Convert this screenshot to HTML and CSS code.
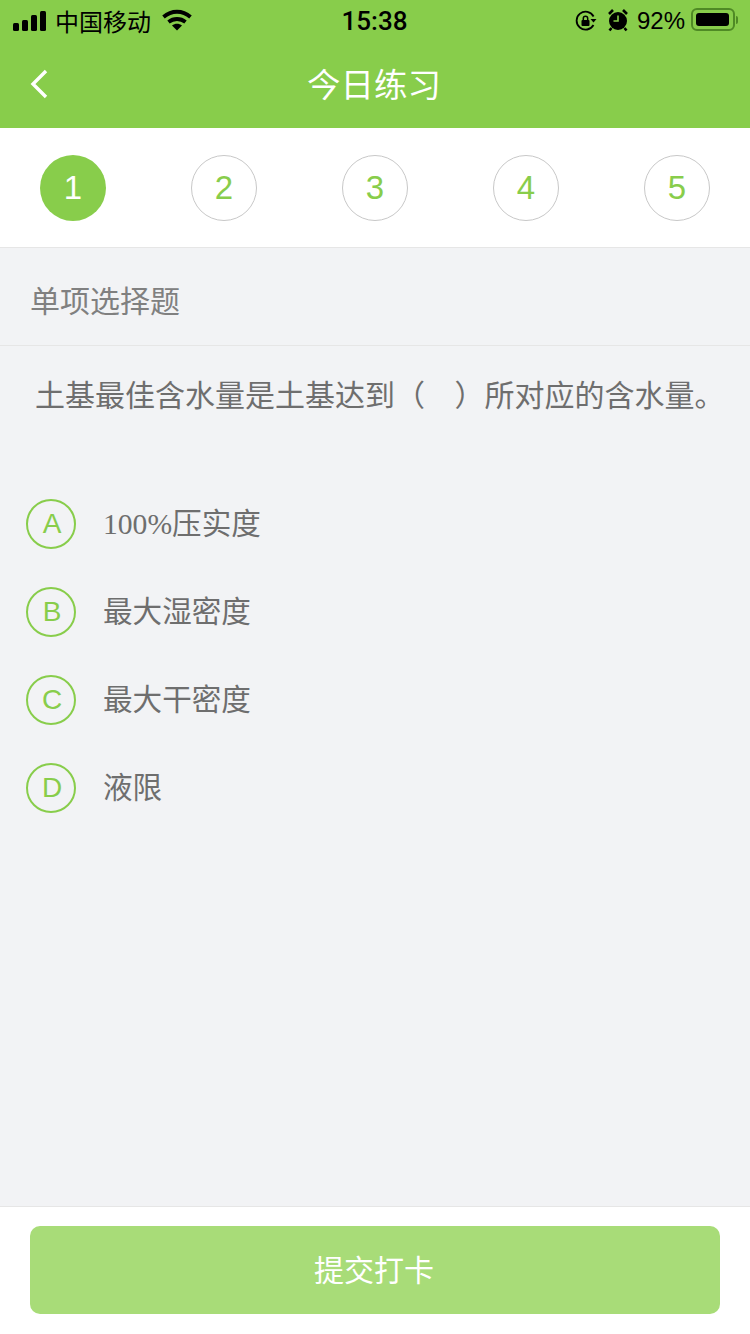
FILE: index.html
```html
<!DOCTYPE html>
<html lang="zh-CN">
<head>
    <meta charset="UTF-8">
    <meta name="viewport" content="width=device-width, initial-scale=1.0">
    <title>今日练习</title>
    <link rel="stylesheet" href="styles.css">
</head>
<body>
<div class="page">
    <header class="top">
        <div class="status-bar">
            <div class="status-left">
                <div class="signal"><i></i><i></i><i></i><i></i></div>
                <span class="carrier">中国移动</span>
                <svg class="wifi" width="30" height="22" viewBox="0 0 30 22">
                    <path d="M1.500 8C9.500 1 20.500 1 28.500 8" fill="none" stroke="#000" stroke-width="3.800"/>
                    <path d="M6.500 13c5-4 12-4 17 0" fill="none" stroke="#000" stroke-width="3.800"/>
                    <path d="M10 16.500c3-2.200 7-2.200 10 0l-5 5z" fill="#000"/>
                </svg>
            </div>
            <span class="clock">15:38</span>
            <div class="status-right">
                <svg class="lock" width="22" height="22" viewBox="0 0 22 22">
                    <path d="M18.500 15A9 9 0 1 1 18.600 6.500" fill="none" stroke="#000" stroke-width="1.800"/>
                    <path d="M15.500 9h6l-3 3.500z" fill="#000"/>
                    <rect x="6.500" y="10" width="8" height="6" rx="1" fill="#000"/>
                    <path d="M8.300 10.500V8.500a2.200 2.200 0 0 1 4.400 0v2" fill="none" stroke="#000" stroke-width="1.500"/>
                </svg>
                <svg class="alarm" width="22" height="24" viewBox="0 0 22 24">
                    <circle cx="11" cy="13" r="9" fill="#000"/>
                    <path d="M11 7.500V13H6.500" fill="none" stroke="#88cd4b" stroke-width="1.600"/>
                    <path d="M2 6 6 2M16 2l4 4M4.500 20l-2 2.500M17.500 20l2 2.500" stroke="#000" stroke-width="2.600"/>
                </svg>
                <span class="percent">92%</span>
                <div class="battery"><div class="battery-fill"></div></div>
                <div class="battery-cap"></div>
            </div>
        </div>
        <div class="nav-bar">
            <svg class="back" width="20" height="32" viewBox="0 0 20 32">
                <path d="M17 3 4 16l13 13" fill="none" stroke="#fff" stroke-width="3.400"/>
            </svg>
            <h1 class="nav-title">今日练习</h1>
        </div>
    </header>

    <nav class="steps">
        <span class="step active">1</span>
        <span class="step">2</span>
        <span class="step">3</span>
        <span class="step">4</span>
        <span class="step">5</span>
    </nav>

    <main class="content">
        <div class="q-type">单项选择题</div>
        <p class="q-text">土基最佳含水量是土基达到（&nbsp;&nbsp;&nbsp;）所对应的含水量。</p>
        <ul class="options">
            <li class="option"><span class="letter">A</span><span class="option-text">100%压实度</span></li>
            <li class="option"><span class="letter">B</span><span class="option-text">最大湿密度</span></li>
            <li class="option"><span class="letter">C</span><span class="option-text">最大干密度</span></li>
            <li class="option"><span class="letter">D</span><span class="option-text">液限</span></li>
        </ul>
    </main>

    <footer class="bottom">
        <button class="submit">提交打卡</button>
    </footer>
</div>
</body>
</html>
```
FILE: styles.css
```css
* {
    box-sizing: border-box;
    margin: 0;
    padding: 0;
}

body {
    width: 750px;
    height: 1334px;
    overflow: hidden;
    font-family: "Liberation Sans", "Noto Sans CJK SC", sans-serif;
}

.page {
    height: 1334px;
    display: flex;
    flex-direction: column;
    background-color: #f2f3f5;
}

.top {
    height: 128px;
    flex: none;
    background-color: #88cd4b;
}

.status-bar {
    height: 42px;
    padding: 0 12px 0 13px;
    display: flex;
    align-items: center;
    justify-content: space-between;
    color: #000;
}

.status-left {
    width: 190px;
    display: flex;
    align-items: center;
}

.signal {
    display: flex;
    align-items: flex-end;
    gap: 3px;
    height: 20px;
}

.signal i {
    width: 6px;
    border-radius: 1.5px;
    background-color: #000;
}

.signal i:nth-child(1) { height: 8px; }
.signal i:nth-child(2) { height: 11px; }
.signal i:nth-child(3) { height: 16px; }
.signal i:nth-child(4) { height: 20px; }

.carrier {
    margin-left: 9px;
    font-size: 24px;
    margin-top: -2px;
    white-space: nowrap;
}

.wifi {
    margin-left: 11px;
    margin-top: -2px;
}

.clock {
    margin-right: 2px;
    font-family: Roboto, sans-serif;
    font-size: 26px;
    font-weight: 500;
}

.status-right {
    display: flex;
    align-items: center;
    justify-content: flex-end;
    width: 190px;
}

.lock {
    margin-right: 1px;
}

.alarm {
    margin-left: 9px;
    margin-top: -3px;
}

.percent {
    margin-left: 8px;
    font-size: 24px;
    white-space: nowrap;
}

.battery {
    width: 44px;
    height: 23px;
    margin-left: 6px;
    margin-top: -3px;
    padding: 3px;
    flex: none;
    border: 2px solid #4f8a25;
    border-radius: 6px;
}

.battery-fill {
    width: 96%;
    height: 100%;
    border-radius: 3px;
    background-color: #000;
}

.battery-cap {
    width: 2px;
    height: 8px;
    margin-left: 1px;
    margin-top: -3px;
    flex: none;
    border-radius: 0 2px 2px 0;
    background-color: #4f8a25;
}

.nav-bar {
    height: 86px;
    display: grid;
    grid-template-columns: 1fr auto 1fr;
    align-items: center;
}

.back {
    margin-left: 29px;
    margin-top: -2px;
}

.nav-title {
    margin-top: -5px;
    margin-right: 2px;
    font-size: 33.500px;
    font-weight: 400;
    color: #fff;
}

.steps {
    height: 120px;
    flex: none;
    padding: 0 40px;
    display: flex;
    align-items: center;
    justify-content: space-between;
    background-color: #fff;
    border-bottom: 1px solid #e6e6e6;
}

.step {
    width: 66px;
    height: 66px;
    margin-top: 1px;
    display: flex;
    align-items: center;
    justify-content: center;
    border: 1px solid #c8c8c8;
    border-radius: 50%;
    font-size: 33px;
    color: #88cd4b;
}

.step.active {
    border: none;
    background-color: #88cd4b;
    color: #fff;
}

.content {
    flex: 1;
}

.q-type {
    height: 98px;
    padding: 4px 0 0 30px;
    display: flex;
    align-items: center;
    font-size: 30px;
    color: #808080;
    border-bottom: 1px solid #e6e6e6;
}

.q-text {
    padding: 30px 0 0 35px;
    font-size: 30px;
    line-height: 40px;
    word-spacing: 1.5px;
    color: #6e6e6e;
    white-space: nowrap;
}

.options {
    margin-top: 64px;
    list-style: none;
}

.option {
    height: 88px;
    padding-left: 26px;
    display: flex;
    align-items: center;
}

.letter {
    width: 50px;
    height: 50px;
    padding-left: 2px;
    flex: none;
    display: flex;
    align-items: center;
    justify-content: center;
    border: 2px solid #88cd4b;
    border-radius: 50%;
    font-size: 28px;
    color: #88cd4b;
}

.option-text {
    margin-left: 27px;
    padding-bottom: 6px;
    font-family: "Liberation Serif", "Noto Sans CJK SC", serif;
    font-size: 29.600px;
    color: #6e6e6e;
}

.bottom {
    height: 128px;
    flex: none;
    padding: 19px 30px 0;
    background-color: #fff;
    border-top: 1px solid #e6e6e6;
}

.submit {
    width: 100%;
    height: 88px;
    padding-bottom: 4px;
    padding-right: 2px;
    border: none;
    border-radius: 10px;
    background-color: #a8dc78;
    font-family: inherit;
    font-size: 30px;
    color: #fff;
}
```
